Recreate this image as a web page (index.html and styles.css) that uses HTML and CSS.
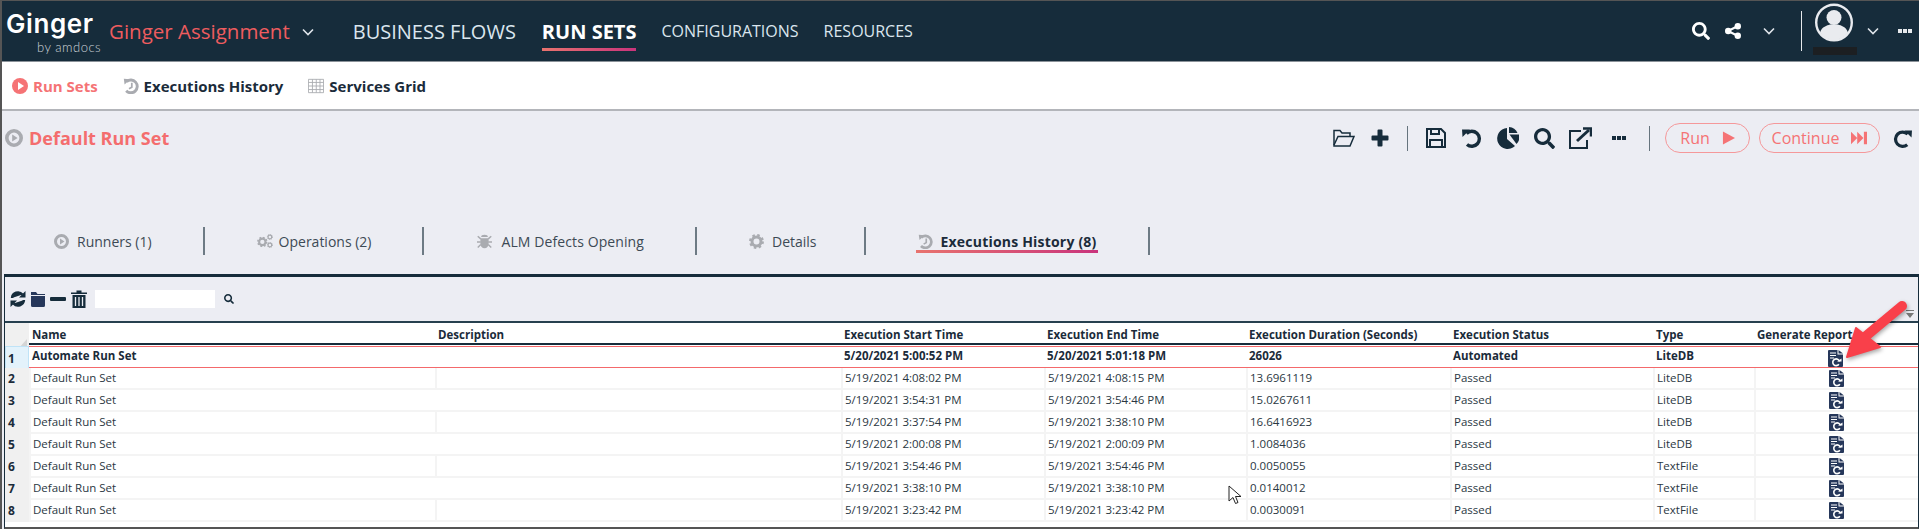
FILE: index.html
```html
<!DOCTYPE html>
<html lang="en">
<head>
    <meta charset="UTF-8">
    <meta name="viewport" content="width=device-width, initial-scale=1.0">
    <title>Ginger - Run Sets</title>
    <link rel="stylesheet" href="styles.css">
</head>
<body>
    <svg class="defs" width="0" height="0">
        <symbol id="i-search" viewBox="0 0 512 512"><path d="M505 442.7L405.3 343c-4.5-4.5-10.6-7-17-7H372c27.6-35.3 44-79.7 44-128C416 93.1 322.9 0 208 0S0 93.1 0 208s93.1 208 208 208c48.3 0 92.7-16.4 128-44v16.3c0 6.4 2.5 12.5 7 17l99.7 99.7c9.4 9.4 24.6 9.4 33.9 0l28.3-28.3c9.4-9.4 9.4-24.6.1-34zM208 336c-70.7 0-128-57.2-128-128 0-70.7 57.2-128 128-128 70.7 0 128 57.2 128 128 0 70.7-57.2 128-128 128z"/></symbol>
        <symbol id="i-play" viewBox="0 0 20 20"><circle cx="10" cy="10" r="10"/><path d="M7.5 5l7.5 5-7.5 5z" fill="#fff"/></symbol>
        <symbol id="i-play-ring" viewBox="0 0 20 20"><circle cx="10" cy="10" r="8" fill="none" stroke="currentColor" stroke-width="4"/><path d="M8 6l6 4-6 4z"/></symbol>
        <symbol id="i-history" viewBox="0 0 20 20"><path d="M4.500 4.500A8 8 0 1 1 4 16" fill="none" stroke="currentColor" stroke-width="3.600"/><path d="M1 1l8 .5L2 8z"/><path d="M11 6v5.500l-3.500 2" fill="none" stroke="currentColor" stroke-width="2.200"/></symbol>
        <symbol id="i-gear" viewBox="0 0 20 20"><circle cx="10" cy="10" r="6" fill="none" stroke="currentColor" stroke-width="4"/><circle cx="10" cy="10" r="8.4" fill="none" stroke="currentColor" stroke-width="3" stroke-dasharray="3.3 3.3"/></symbol>
        <symbol id="i-bug" viewBox="0 0 20 20"><path d="M5.5 4a4.5 3 0 0 1 9 0zM4.500 5.500h11V13a5.500 6 0 0 1-11 0z"/><path d="M1 3l4 3.500M19 3l-4 3.500M0 10.500h5M20 10.500h-5M1 18l4-4M19 18l-4-4" fill="none" stroke="currentColor" stroke-width="2"/></symbol>
        <symbol id="i-report" viewBox="0 0 15 17"><path d="M1 0h8.500v4.500H15V16a1 1 0 0 1-1 1H1a1 1 0 0 1-1-1V1a1 1 0 0 1 1-1z" fill="#26375a"/><path d="M10.500 0L15 3.500h-4.500z" fill="#26375a"/><path d="M2 3h6M2 5.500h6M2 8h4" stroke="#fff" stroke-width="1.200" fill="none"/><path d="M11.500 11.500a3.400 3.400 0 1 0-.6 2.800" stroke="#fff" stroke-width="1.600" fill="none"/><path d="M9 11.500h4.500V8.500z" fill="#fff"/></symbol>
    </svg>

    <div class="shell">
        <div class="topbar">
            <div class="logo">
                <div class="logo-name">Ginger</div>
                <div class="logo-by">by amdocs</div>
            </div>
            <div class="solution">Ginger Assignment</div>
            <svg class="chevron chevron-solution" viewBox="0 0 12 8"><path d="M1 1.500l5 5 5-5"/></svg>
            <a class="nav-link nav-large nav-business">BUSINESS FLOWS</a>
            <a class="nav-link nav-large nav-active">RUN SETS</a>
            <a class="nav-link nav-config">CONFIGURATIONS</a>
            <a class="nav-link nav-resources">RESOURCES</a>

            <div class="topbar-right">
                <svg class="top-search"><use href="#i-search"/></svg>
                <svg class="top-share" viewBox="0 0 16 16">
                    <path d="M3 8l10-5M3 8l10 5" stroke="#fff" stroke-width="2"/>
                    <circle cx="3.200" cy="8" r="3.200"/><circle cx="12.800" cy="3.200" r="3.200"/><circle cx="12.800" cy="12.800" r="3.200"/>
                </svg>
                <svg class="chevron chevron-share" viewBox="0 0 12 8"><path d="M1 1.500l5 5 5-5"/></svg>
                <div class="top-sep"></div>
                <div class="user">
                    <svg class="avatar" viewBox="0 0 38 38">
                        <ellipse cx="19" cy="19" rx="17.800" ry="17.800" fill="#162c3b" stroke="#e9ebef" stroke-width="2.400"/>
                        <circle cx="19" cy="14" r="7.500" fill="#e9ebef"/>
                        <path d="M5 29c2-6 7-7 10-8h8c3 1 8 2 10 8a17 17 0 0 1-28 0z" fill="#e9ebef"/>
                    </svg>
                    <div class="user-name"></div>
                </div>
                <svg class="chevron chevron-user" viewBox="0 0 12 8"><path d="M1 1.500l5 5 5-5"/></svg>
                <div class="dots dots-light"><i></i><i></i><i></i></div>
            </div>
        </div>

        <div class="subnav">
            <a class="subnav-link subnav-active"><svg class="sub-icon"><use href="#i-play"/></svg>Run Sets</a>
            <a class="subnav-link"><svg class="sub-icon sub-gray"><use href="#i-history"/></svg>Executions History</a>
            <a class="subnav-link"><svg class="sub-icon sub-gray" viewBox="0 0 18 16">
                <path d="M.5.500h17v15H.5zM.5 4h17M.5 8h17M.5 12h17M5 .500v15M9.300.500v15M13.500.500v15" fill="none" stroke="currentColor"/>
            </svg>Services Grid</a>
        </div>

        <div class="content">
            <div class="title-row">
                <svg class="title-icon"><use href="#i-play-ring"/></svg>
                <div class="title">Default Run Set</div>

                <div class="actions">
                    <svg class="act act-open" viewBox="0 0 22 18" fill="none" stroke="#162c3b" stroke-width="1.500">
                        <path d="M1 16V1.500h6l2 2.500h8v3"/><path d="M1 16L5 7.500h16L17 17H1z"/>
                    </svg>
                    <svg class="act act-plus" viewBox="0 0 18 18"><path d="M6.500 1.500a1 1 0 0 1 1-1h3a1 1 0 0 1 1 1v5h5a1 1 0 0 1 1 1v3a1 1 0 0 1-1 1h-5v5a1 1 0 0 1-1 1h-3a1 1 0 0 1-1-1v-5h-5a1 1 0 0 1-1-1v-3a1 1 0 0 1 1-1h5z"/></svg>
                    <div class="act-sep"></div>
                    <svg class="act act-save" viewBox="0 0 20 20" fill="none" stroke="#162c3b" stroke-width="2">
                        <path d="M1 1h14l4 4v14H1z"/><path d="M5 1v5h8V1M4 19v-7h12v7"/>
                    </svg>
                    <svg class="act act-undo" viewBox="0 0 20 20">
                        <path d="M4.500 5.500A7.500 7.500 0 1 1 5 16.500" fill="none" stroke="#162c3b" stroke-width="3.400"/>
                        <path d="M0 1.500h8L.5 9z"/>
                    </svg>
                    <svg class="act act-pie" viewBox="0 0 22 22">
                        <path d="M10 1v11l8 7a10.500 10.500 0 1 1-8-18z"/><path d="M12 0a10 10 0 0 1 8.500 6H12z"/><path d="M12.500 7.500H22a10 10 0 0 1-2.500 9.500z"/>
                    </svg>
                    <svg class="act act-search"><use href="#i-search"/></svg>
                    <svg class="act act-ext" viewBox="0 0 23 22" fill="none" stroke="#162c3b" stroke-width="2">
                        <path d="M12 4H1v17h17v-8"/><path d="M8 14L20 3" stroke-width="3"/><path d="M14 1.500h8v8" stroke-width="2.500"/>
                    </svg>
                    <div class="dots dots-dark"><i></i><i></i><i></i></div>
                    <div class="act-sep act-sep-2"></div>
                    <button class="run-btn btn-run">Run<svg viewBox="0 0 14 14"><path d="M1 0l13 7-13 7z"/></svg></button>
                    <button class="run-btn btn-continue">Continue<svg class="ff" viewBox="0 0 18 14"><path d="M0 0l7 7-7 7zM7 0l7 7-7 7zM14.500 0H18v14h-3.500z"/></svg></button>
                    <svg class="act act-reload" viewBox="0 0 20 20">
                        <path d="M15.500 5.500A7.500 7.500 0 1 0 15 16.500" fill="none" stroke="#162c3b" stroke-width="3.400"/>
                        <path d="M20 1.500h-8L19.500 9z"/>
                    </svg>
                </div>
            </div>

            <div class="tabs">
                <div class="tab"><svg class="tab-icon"><use href="#i-play-ring"/></svg>Runners (1)</div>
                <div class="tab tab-ops"><svg class="tab-icon tab-gears" viewBox="0 0 18 16">
                    <use href="#i-gear" width="12" height="12" y="3"/><use href="#i-gear" x="11" y="0" width="7" height="7"/><use href="#i-gear" x="11" y="9" width="7" height="7"/>
                </svg>Operations (2)</div>
                <div class="tab tab-alm"><svg class="tab-icon"><use href="#i-bug"/></svg>ALM Defects Opening</div>
                <div class="tab tab-details"><svg class="tab-icon"><use href="#i-gear"/></svg>Details</div>
                <div class="tab tab-active"><svg class="tab-icon"><use href="#i-history"/></svg><span>Executions History (8)</span></div>
            </div>

            <div class="panel">
                <div class="panel-tools">
                    <svg class="tool tool-sync" viewBox="0 0 16 16" fill="none" stroke="#162c3b" stroke-width="2.400">
                        <path d="M2 7a6 6 0 0 1 10.500-3.500"/><path d="M14 9a6 6 0 0 1-10.500 3.500"/>
                        <path d="M15.500 0v6.500H9zM.5 16V9.500H7z" fill="#162c3b" stroke="none"/>
                    </svg>
                    <svg class="tool tool-folder" viewBox="0 0 14 16"><path d="M0 1h5l1.500 2H14v1H0zM0 5h14v9.500a1.500 1.500 0 0 1-1.500 1.500h-11A1.500 1.500 0 0 1 0 14.500z" fill="#26375a"/></svg>
                    <svg class="tool tool-minus" viewBox="0 0 16 16"><rect y="6" width="16" height="4" rx="1"/></svg>
                    <svg class="tool tool-trash" viewBox="0 0 16 18"><path d="M0 2.500h5.500V.5h5v2H16V4H0zM1.500 5h13v13h-13z"/><path d="M4.500 7v9M8 7v9M11.500 7v9" stroke="#ecedf3" stroke-width="1.300"/></svg>
                    <div class="search-box"></div>
                    <svg class="tool-find"><use href="#i-search"/></svg>
                    <svg class="tool-filter" viewBox="0 0 8 8"><path d="M0 0h8v1H0zM0 3h8L4 8z"/></svg>
                </div>

                <div class="grid">
                    <div class="row head">
                        <div class="corner"><svg viewBox="0 0 9 10"><path d="M9 0v10H0z"/></svg></div>
                        <div class="cell">Name</div><div class="cell">Description</div><div class="cell">Execution Start Time</div><div class="cell">Execution End Time</div><div class="cell">Execution Duration (Seconds)</div><div class="cell">Execution Status</div><div class="cell">Type</div><div class="cell">Generate Report</div>
                    </div>
                    <div class="row selected">
                        <div class="row-num">1</div>
                        <div class="cell">Automate Run Set</div><div class="cell"></div><div class="cell">5/20/2021 5:00:52 PM</div><div class="cell">5/20/2021 5:01:18 PM</div><div class="cell">26026</div><div class="cell">Automated</div><div class="cell">LiteDB</div><div class="cell cell-report"><svg class="report"><use href="#i-report"/></svg></div>
                    </div>
                    <div class="row split">
                        <div class="row-num">2</div>
                        <div class="cell">Default Run Set</div><div class="cell"></div><div class="cell">5/19/2021 4:08:02 PM</div><div class="cell">5/19/2021 4:08:15 PM</div><div class="cell">13.6961119</div><div class="cell">Passed</div><div class="cell">LiteDB</div><div class="cell cell-report"><svg class="report"><use href="#i-report"/></svg></div>
                    </div>
                    <div class="row">
                        <div class="row-num">3</div>
                        <div class="cell">Default Run Set</div><div class="cell"></div><div class="cell">5/19/2021 3:54:31 PM</div><div class="cell">5/19/2021 3:54:46 PM</div><div class="cell">15.0267611</div><div class="cell">Passed</div><div class="cell">LiteDB</div><div class="cell cell-report"><svg class="report"><use href="#i-report"/></svg></div>
                    </div>
                    <div class="row split">
                        <div class="row-num">4</div>
                        <div class="cell">Default Run Set</div><div class="cell"></div><div class="cell">5/19/2021 3:37:54 PM</div><div class="cell">5/19/2021 3:38:10 PM</div><div class="cell">16.6416923</div><div class="cell">Passed</div><div class="cell">LiteDB</div><div class="cell cell-report"><svg class="report"><use href="#i-report"/></svg></div>
                    </div>
                    <div class="row">
                        <div class="row-num">5</div>
                        <div class="cell">Default Run Set</div><div class="cell"></div><div class="cell">5/19/2021 2:00:08 PM</div><div class="cell">5/19/2021 2:00:09 PM</div><div class="cell">1.0084036</div><div class="cell">Passed</div><div class="cell">LiteDB</div><div class="cell cell-report"><svg class="report"><use href="#i-report"/></svg></div>
                    </div>
                    <div class="row split">
                        <div class="row-num">6</div>
                        <div class="cell">Default Run Set</div><div class="cell"></div><div class="cell">5/19/2021 3:54:46 PM</div><div class="cell">5/19/2021 3:54:46 PM</div><div class="cell">0.0050055</div><div class="cell">Passed</div><div class="cell">TextFile</div><div class="cell cell-report"><svg class="report"><use href="#i-report"/></svg></div>
                    </div>
                    <div class="row">
                        <div class="row-num">7</div>
                        <div class="cell">Default Run Set</div><div class="cell"></div><div class="cell">5/19/2021 3:38:10 PM</div><div class="cell">5/19/2021 3:38:10 PM</div><div class="cell">0.0140012</div><div class="cell">Passed</div><div class="cell">TextFile</div><div class="cell cell-report"><svg class="report"><use href="#i-report"/></svg></div>
                    </div>
                    <div class="row split">
                        <div class="row-num">8</div>
                        <div class="cell">Default Run Set</div><div class="cell"></div><div class="cell">5/19/2021 3:23:42 PM</div><div class="cell">5/19/2021 3:23:42 PM</div><div class="cell">0.0030091</div><div class="cell">Passed</div><div class="cell">TextFile</div><div class="cell cell-report"><svg class="report"><use href="#i-report"/></svg></div>
                    </div>
                </div>
            </div>
        </div>

        <!-- annotation + mouse pointer sit on top of the grid -->
        <svg class="arrow" viewBox="0 0 70 70">
            <path d="M62 6L26 36" stroke="#f9404a" stroke-width="10" stroke-linecap="round" fill="none"/>
            <path d="M7 57L16 28L40 47z" fill="#f9404a" stroke="#f9404a" stroke-width="2" stroke-linejoin="round"/>
        </svg>
        <svg class="pointer" viewBox="0 0 14 20"><path d="M1 1v15l4-3.500 2.500 6 2.500-1-2.500-6H13z" fill="#fff" stroke="#222" stroke-width="1"/></svg>
    </div>
</body>
</html>
```

FILE: styles.css
```css
* {
    box-sizing: border-box;
}
body {
    margin: 0;
    font-family: "Open Sans", "Noto Sans", sans-serif;
    background: #ecedf3;
    overflow: hidden;
}
.defs {
    position: absolute;
}
.shell {
    position: relative;
    width: 1919px;
    height: 529px;
    border-top: 1px solid #555;
    border-left: 2px solid #555;
    display: flex;
    flex-direction: column;
    overflow: hidden;
}

/* top bar */
.topbar {
    height: 61px;
    flex: none;
    background: #162c3b;
    border-bottom: 1px solid #8b9299;
    display: flex;
    align-items: center;
    color: #fff;
}
.logo {
    width: 95px;
    margin-left: 4px;
    align-self: flex-start;
    padding-top: 7px;
    flex: none;
}
.logo-name {
    font-family: Inter, sans-serif;
    font-weight: 600;
    font-size: 26px;
    line-height: 32px;
    letter-spacing: 0.6px;
}
.logo-by {
    font-family: Lato, sans-serif;
    font-weight: 300;
    font-size: 13px;
    line-height: 14px;
    letter-spacing: 0.5px;
    margin-left: 31px;
    white-space: nowrap;
    color: #cfd5da;
}
.solution {
    margin-left: 8px;
    font-size: 20.5px;
    color: #ee5c5f;
    white-space: nowrap;
}
.chevron {
    fill: none;
    stroke: #dfe4ea;
    stroke-width: 1.6;
    flex: none;
    width: 12px;
    height: 8px;
}
.chevron-solution {
    margin-left: 12px;
    margin-top: 2px;
}
.nav-link {
    white-space: nowrap;
    color: #dbe6ee;
    font-size: 16px;
    position: relative;
}
.nav-large {
    font-size: 20px;
}
.nav-business {
    margin-left: 39px;
}
.nav-active {
    margin-left: 26px;
    color: #fff;
    font-weight: 700;
}
.nav-active::after {
    content: "";
    position: absolute;
    left: 0;
    right: 0;
    bottom: -6px;
    height: 3px;
    background: linear-gradient(90deg, #e8736e, #c9347c);
}
.nav-config {
    margin-left: 25px;
}
.nav-resources {
    margin-left: 25px;
}
.topbar-right {
    margin-left: auto;
    display: flex;
    align-items: center;
    height: 100%;
}
.top-search {
    width: 18px;
    height: 18px;
    fill: #fff;
    margin-right: 15px;
}
.top-share {
    width: 16px;
    height: 16px;
    fill: #fff;
    margin-right: 22px;
}
.chevron-share {
    margin-right: 26px;
}
.top-sep {
    width: 1px;
    height: 40px;
    background: #e6e9ec;
    margin-right: 11px;
}
.user {
    width: 44px;
    height: 100%;
    margin-right: 10px;
    padding-top: 2px;
}
.avatar {
    display: block;
    width: 38px;
    height: 39px;
    margin-left: 2px;
}
.user-name {
    height: 8px;
    margin-top: 5px;
    background: #1c1f22;
}
.dots {
    display: flex;
    gap: 1px;
}
.dots i {
    width: 4px;
    height: 4px;
}
.dots-light {
    margin-left: 19px;
    margin-right: 7px;
}
.dots-light i {
    background: #e6e9ec;
}
.dots-dark i {
    background: #162c3b;
}

/* second row */
.subnav {
    height: 49px;
    flex: none;
    background: #fff;
    border-bottom: 2px solid #b3b5ba;
    display: flex;
    align-items: center;
    padding-left: 10px;
    gap: 25px;
}
.subnav-link {
    display: flex;
    align-items: center;
    gap: 5px;
    font-size: 15px;
    font-weight: 700;
    color: #1b2b3a;
}
.subnav-active {
    color: #f57375;
}
.sub-icon {
    width: 16px;
    height: 16px;
    fill: #f57375;
}
.sub-gray {
    fill: #a9abb0;
    color: #a9abb0;
}

/* content */
.content {
    flex: 1;
    min-height: 0;
    display: flex;
    flex-direction: column;
    background: #ecedf3;
}
.title-row {
    height: 54px;
    flex: none;
    display: flex;
    align-items: center;
    padding-left: 3px;
}
.title-icon {
    width: 18px;
    height: 18px;
    fill: #a9abb0;
    color: #a9abb0;
    margin-right: 6px;
}
.title {
    font-size: 18px;
    font-weight: 700;
    color: #f46d6e;
}
.actions {
    margin-left: auto;
    display: flex;
    align-items: center;
    fill: #162c3b;
    padding-right: 7px;
}
.act {
    flex: none;
    width: 20px;
    height: 20px;
}
.act-open {
    width: 22px;
    height: 18px;
    margin-right: 16px;
}
.act-plus {
    width: 18px;
    height: 18px;
    margin-right: 18px;
}
.act-sep {
    width: 1px;
    height: 25px;
    background: #66747e;
    margin-right: 18px;
}
.act-save {
    margin-right: 16px;
}
.act-undo {
    margin-right: 15px;
}
.act-pie {
    width: 22px;
    height: 22px;
    margin-right: 15px;
}
.act-search {
    width: 21px;
    height: 21px;
    margin-right: 14px;
}
.act-ext {
    width: 23px;
    height: 22px;
    margin-right: 20px;
}
.act-sep-2 {
    margin-left: 23px;
    margin-right: 15px;
}
.run-btn {
    height: 30px;
    border: 1px solid #f5989a;
    border-radius: 15px;
    background: transparent;
    color: #f57375;
    font-family: inherit;
    font-size: 16px;
    display: flex;
    align-items: center;
    justify-content: center;
    gap: 12px;
    padding: 0;
    fill: #f57375;
}
.run-btn svg {
    width: 13px;
    height: 14px;
}
.run-btn .ff {
    width: 16px;
}
.btn-run {
    width: 85px;
    margin-right: 9px;
}
.btn-continue {
    width: 121px;
    margin-right: 13px;
}
.act-reload {
    width: 19px;
    height: 19px;
}

/* tabs */
.tabs {
    flex: none;
    height: 28px;
    margin-top: 62px;
    display: flex;
    align-items: center;
    font-size: 14px;
    color: #3d4a55;
}
.tab {
    height: 100%;
    padding: 0 51px 0 52px;
    border-right: 2px solid #6d7a84;
    display: flex;
    align-items: center;
    gap: 8px;
    white-space: nowrap;
}
.tab-icon {
    width: 15px;
    height: 15px;
    flex: none;
    fill: #a9abb0;
    color: #a9abb0;
}
.tab-gears {
    width: 16px;
    height: 16px;
}
.tab-ops {
    gap: 6px;
}
.tab-alm {
    letter-spacing: 0.1px;
}
.tab-alm .tab-icon {
    width: 17px;
}
.tab-details {
    padding-right: 47px;
}
.tab-active {
    font-weight: 700;
    color: #1b2b3a;
    position: relative;
    letter-spacing: 0.2px;
}
.tab-active::after {
    content: "";
    position: absolute;
    left: 50px;
    right: 50px;
    bottom: 2px;
    height: 3px;
    background: linear-gradient(90deg, #e8736e, #c9347c);
}

/* grid panel */
.panel {
    margin-top: 19px;
    margin-left: 2px;
    flex: 1;
    min-height: 0;
    display: flex;
    flex-direction: column;
    border-top: 3px solid #162c3b;
    border-left: 1px solid #162c3b;
    border-right: 1px solid #162c3b;
    border-bottom: 2px solid #555;
    background: #fff;
}
.panel-tools {
    flex: none;
    height: 46px;
    background: #ecedf3;
    border-bottom: 2px solid #26404f;
    display: flex;
    align-items: center;
    padding-left: 5px;
}
.tool {
    flex: none;
    width: 16px;
    height: 16px;
    fill: #162c3b;
    margin-right: 5px;
}
.tool-folder {
    width: 14px;
}
.tool-trash {
    height: 18px;
    margin-right: 8px;
}
.search-box {
    width: 120px;
    height: 18px;
    background: #fff;
}
.tool-find {
    width: 10px;
    height: 10px;
    margin-left: 9px;
    fill: #162c3b;
}
.tool-filter {
    width: 8px;
    height: 8px;
    margin-left: auto;
    margin-right: 4px;
    margin-top: 30px;
    fill: #777;
}
.grid {
    flex: 1;
    font-size: 11.5px;
    color: #2a3742;
}
.row {
    display: grid;
    grid-template-columns: 24px 406px 406px 203px 202px 204px 203px 101px 161px;
    height: 22px;
    border-bottom: 2px solid #f4f4f4;
}
.cell {
    padding-left: 2px;
    line-height: 19px;
    white-space: nowrap;
    border-left: 2px solid #f4f4f4;
}
.row:not(.split) .cell:nth-child(3) {
    border-left-color: transparent;
}
.row-num {
    background: #f0f0f0;
    font-weight: 700;
    font-size: 12px;
    padding-left: 3px;
    line-height: 22px;
    color: #1b2b3a;
}
.head {
    border-bottom: 2px solid #162c3b;
    font-weight: 700;
    color: #1b2b3a;
}
.head .cell {
    border-left: 0;
    padding-left: 3px;
    line-height: 24px;
}
.corner {
    background: #f0f0f0;
    display: flex;
    align-items: flex-end;
    justify-content: flex-end;
    padding: 0 2px 0 0;
    margin-bottom: -2px;
    fill: #d5d5d5;
}
.corner svg {
    width: 9px;
    height: 10px;
}
.selected {
    border-top: 1px solid #f4696b;
    border-bottom: 1px solid #f4696b;
    font-weight: 700;
    color: #1b2b3a;
    margin-top: 1px;
}
.selected .cell {
    border-left: 0;
    padding-left: 3px;
    line-height: 18px;
}
.selected .row-num {
    background: #e3f2fb;
    border: 1px solid #bfe3f7;
    margin: -1px 0;
    line-height: 24px;
    padding-left: 2px;
}
.cell-report {
    display: flex;
    justify-content: center;
    align-items: center;
}
.selected .cell-report {
    padding-left: 2px;
}
.report {
    width: 15px;
    height: 17px;
    margin-top: -2px;
}

/* overlays */
.arrow {
    position: absolute;
    left: 1838px;
    top: 299px;
    width: 70px;
    height: 70px;
    filter: drop-shadow(1px 2px 2px rgba(0,0,0,0.35));
}
.pointer {
    position: absolute;
    left: 1226px;
    top: 484px;
    width: 14px;
    height: 20px;
}
```
